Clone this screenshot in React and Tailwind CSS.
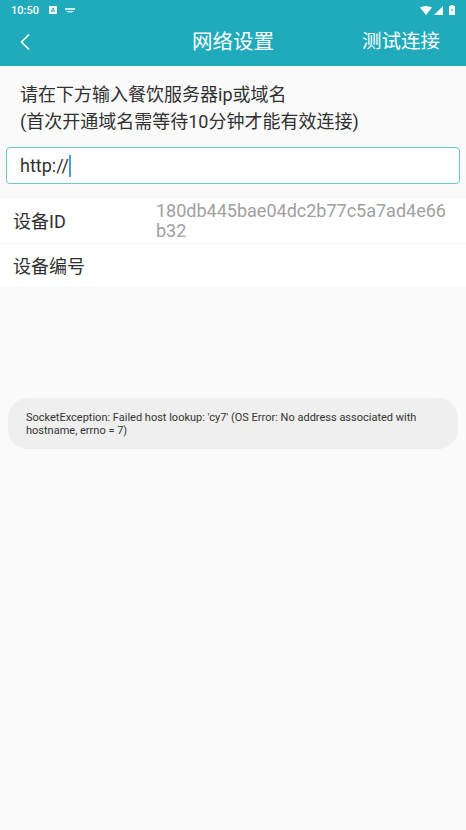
import React from 'react';
import { ChevronLeft } from 'lucide-react';

const font = "font-['Roboto','Noto_Sans_CJK_SC',sans-serif]";

export default function App() {
  return (
    <div className={`${font} h-[830px] w-[466px] overflow-hidden bg-[#fafafa] text-[#303030] flex flex-col`}>
      {/* 顶部栏 */}
      <div className="h-[66px] bg-[#1fabbb] text-white flex flex-col shrink-0">
        <div className="h-[20px] px-[11px] flex items-center justify-between">
          <div className="flex items-center">
            <span className="text-[11px] font-medium leading-none w-[38px]">10:50</span>
            <svg width="8" height="8" viewBox="0 0 9 9">
              <rect width="9" height="9" rx="1" fill="white" />
              <path d="M2.5 7 L4.5 2 L6.5 7 M3.3 5.5 H5.7" stroke="#1fabbb" strokeWidth="1" fill="none" />
            </svg>
            <svg width="10" height="5" viewBox="0 0 10 5" className="ml-[8px]">
              <path d="M0 0 H10 V2 H0 Z M1.5 3 H8.5 V4 H1.5 Z M3 4.4 H7 V5 H3 Z" fill="white" opacity="0.75" />
            </svg>
          </div>
          <div className="flex items-center">
            <svg width="12" height="9" viewBox="0 0 12 9">
              <path d="M0 1.5 Q6 -1.5 12 1.5 L6 9 Z" fill="white" />
            </svg>
            <svg width="9" height="9" viewBox="0 0 9 9" className="ml-[2px]">
              <path d="M9 0 V9 H0 Z" fill="white" />
            </svg>
            <svg width="6" height="10" viewBox="0 0 6 10" className="ml-[6px]">
              <path d="M1.5 0 H4.5 V1 H6 V10 H0 V1 H1.5 Z" fill="white" />
              <path d="M3.4 2.5 L2 5.4 H3 L2.6 7.5 L4 4.6 H3 Z" fill="#1fabbb" />
            </svg>
          </div>
        </div>
        <div className="relative flex-1 flex items-center justify-between">
          <ChevronLeft size={28} strokeWidth={1.5} className="ml-[11px] mt-[-2px]" />
          <span className="absolute left-0 right-0 text-center text-[20.5px] leading-none mt-[-2px]">网络设置</span>
          <span className="text-[19.5px] leading-none mr-[26px] mt-[-3px]">测试连接</span>
        </div>
      </div>

      {/* 提示文字 */}
      <div className="pt-[15px] pl-[20px] text-[18px] leading-[27px]">
        <p>请在下方输入餐饮服务器ip或域名</p>
        <p>(首次开通域名需等待10分钟才能有效连接)</p>
      </div>

      {/* 地址输入 */}
      <div className="mt-[12px] mx-[6px] h-[37px] bg-white border border-[#6fc3d0] rounded-[4px] flex items-center pl-[13px] text-[18px]">
        <span>http://</span>
        <span className="w-[2px] h-[22px] bg-[#4a9fd0]"></span>
      </div>

      {/* 设备信息 */}
      <div className="mt-[15px] bg-white">
        <div className="h-[45px] flex items-center border-b border-[#f5f5f5]">
          <span className="w-[156px] pl-[13px] text-[18px] shrink-0">设备ID</span>
          <span className="w-[296px] text-[18px] leading-[20px] text-[#a0a0a0] break-all">180db445bae04dc2b77c5a7ad4e66b32</span>
        </div>
        <div className="h-[43px] flex items-center pl-[13px] pt-[1px] text-[18px]">设备编号</div>
      </div>

      {/* 错误提示 */}
      <div className="mt-[111px] mx-[8px] h-[51px] bg-[#efefef] rounded-[20px] px-[18px] pt-[1px] flex items-center text-[11px] leading-[13px] text-[#333]">
        <p>SocketException: Failed host lookup: 'cy7' (OS Error: No address associated with hostname, errno = 7)</p>
      </div>
    </div>
  );
}
